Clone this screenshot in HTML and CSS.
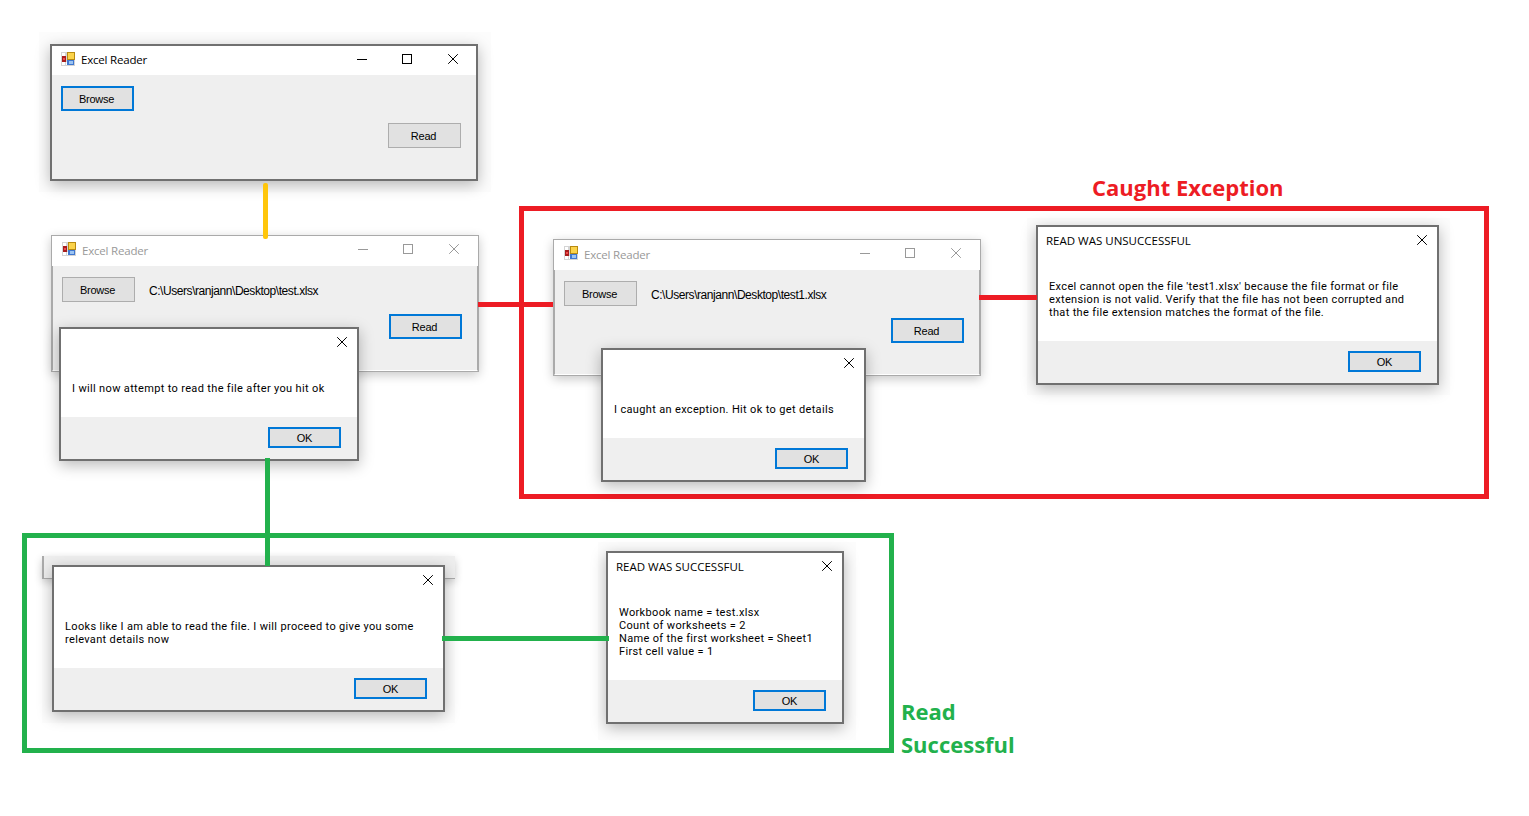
FILE: index.html
```html
<!DOCTYPE html>
<html lang="en">
<head>
  <meta charset="UTF-8" />
  <title>Excel Reader flow</title>
  <link rel="stylesheet" href="styles.css">
</head>
<body>
  <svg class="defs" width="0" height="0">
    <symbol id="app-icon" viewBox="0 0 14 14">
      <rect width="14" height="14" fill="#d4d4d4"/>
      <rect x="1" y="1" width="3" height="3" fill="#fff"/>
      <rect x="1" y="10" width="3" height="3" fill="#fff"/>
      <rect x="5" y="10" width="1" height="3" fill="#fff"/>
      <rect x="1" y="4" width="4" height="6" fill="#a81c1c"/>
      <rect x="2" y="6" width="2" height="2" fill="#f04a4a"/>
      <rect x="6" y="0" width="8" height="8" fill="#b88a10"/>
      <rect x="7" y="1" width="6" height="6" fill="#fbd34a"/>
      <rect x="6" y="8" width="7" height="5" fill="#3f77d0"/>
      <rect x="8" y="9" width="4" height="3" fill="#9cc4f2"/>
    </symbol>
    <symbol id="ico-min" viewBox="0 0 10 10"><path d="M0 5.5H10" stroke="currentColor" fill="none"/></symbol>
    <symbol id="ico-max" viewBox="0 0 10 10"><rect x=".5" y=".5" width="9" height="9" stroke="currentColor" fill="none"/></symbol>
    <symbol id="ico-close" viewBox="0 0 10 10"><path d="M.2 .2L9.8 9.8M9.8 .2L.2 9.8" stroke="currentColor" fill="none"/></symbol>
  </svg>

  <div class="haze haze-main"></div>
  <div class="haze haze-error"></div>
  <div class="haze haze-details"></div>
  <div class="haze haze-ok"></div>

  <!-- step 1 -->
  <div class="window win-start">
    <div class="titlebar">
      <svg class="app-icon"><use href="#app-icon"/></svg>
      <span class="title">Excel Reader</span>
      <span class="caption caption-min"><svg><use href="#ico-min"/></svg></span>
      <span class="caption"><svg><use href="#ico-max"/></svg></span>
      <span class="caption"><svg><use href="#ico-close"/></svg></span>
    </div>
    <div class="client">
      <div class="row"><button class="btn focus">Browse</button></div>
      <div class="row row-end"><button class="btn">Read</button></div>
    </div>
  </div>

  <!-- step 2 -->
  <div class="window inactive win-picked">
    <div class="titlebar">
      <svg class="app-icon"><use href="#app-icon"/></svg>
      <span class="title">Excel Reader</span>
      <span class="caption caption-min"><svg><use href="#ico-min"/></svg></span>
      <span class="caption"><svg><use href="#ico-max"/></svg></span>
      <span class="caption"><svg><use href="#ico-close"/></svg></span>
    </div>
    <div class="client">
      <div class="row"><button class="btn">Browse</button><span class="path">C:\Users\ranjann\Desktop\test.xlsx</span></div>
      <div class="row row-end"><button class="btn focus">Read</button></div>
    </div>
  </div>

  <div class="window dialog dlg-attempt">
    <div class="titlebar">
      <span class="title"></span>
      <span class="caption small"><svg><use href="#ico-close"/></svg></span>
    </div>
    <div class="msg"><p>I will now attempt to read the file after you hit ok</p></div>
    <div class="footer"><button class="btn focus ok">OK</button></div>
  </div>

  <!-- failure path -->
  <div class="frame frame-red"></div>
  <h2 class="label label-red">Caught Exception</h2>

  <div class="window inactive win-bad">
    <div class="titlebar">
      <svg class="app-icon"><use href="#app-icon"/></svg>
      <span class="title">Excel Reader</span>
      <span class="caption caption-min"><svg><use href="#ico-min"/></svg></span>
      <span class="caption"><svg><use href="#ico-max"/></svg></span>
      <span class="caption"><svg><use href="#ico-close"/></svg></span>
    </div>
    <div class="client">
      <div class="row"><button class="btn">Browse</button><span class="path">C:\Users\ranjann\Desktop\test1.xlsx</span></div>
      <div class="row row-end"><button class="btn focus">Read</button></div>
    </div>
  </div>

  <div class="window dialog dlg-caught">
    <div class="titlebar">
      <span class="title"></span>
      <span class="caption small"><svg><use href="#ico-close"/></svg></span>
    </div>
    <div class="msg"><p>I caught an exception. Hit ok to get details</p></div>
    <div class="footer"><button class="btn focus ok">OK</button></div>
  </div>

  <div class="window dialog dlg-error">
    <div class="titlebar">
      <span class="title">READ WAS UNSUCCESSFUL</span>
      <span class="caption small"><svg><use href="#ico-close"/></svg></span>
    </div>
    <div class="msg"><p>Excel cannot open the file 'test1.xlsx' because the file format or file<br>extension is not valid. Verify that the file has not been corrupted and<br>that the file extension matches the format of the file.</p></div>
    <div class="footer"><button class="btn focus ok">OK</button></div>
  </div>

  <!-- success path -->
  <div class="frame frame-green"></div>
  <h2 class="label label-green">Read<br>Successful</h2>
  <div class="sliver"></div>

  <div class="window dialog dlg-proceed">
    <div class="titlebar">
      <span class="title"></span>
      <span class="caption small"><svg><use href="#ico-close"/></svg></span>
    </div>
    <div class="msg"><p>Looks like I am able to read the file. I will proceed to give you some<br>relevant details now</p></div>
    <div class="footer"><button class="btn focus ok">OK</button></div>
  </div>

  <div class="window dialog dlg-details">
    <div class="titlebar">
      <span class="title">READ WAS SUCCESSFUL</span>
      <span class="caption small"><svg><use href="#ico-close"/></svg></span>
    </div>
    <div class="msg"><p>Workbook name = test.xlsx<br>Count of worksheets = 2<br>Name of the first worksheet = Sheet1<br>First cell value = 1</p></div>
    <div class="footer"><button class="btn focus ok">OK</button></div>
  </div>

  <!-- connectors -->
  <div class="link link-yellow"></div>
  <div class="link link-red-a"></div>
  <div class="link link-red-b"></div>
  <div class="link link-green-a"></div>
  <div class="link link-green-b"></div>
</body>
</html>
```

FILE: styles.css
```css
html, body {
  margin: 0;
  height: 100%;
  background: #fff;
  overflow: hidden;
}
body {
  position: relative;
  font-family: "Open Sans", sans-serif;
  font-size: 12px;
  color: #000;
}
.defs {
  position: absolute;
}

/* windows */
.window {
  position: absolute;
  box-sizing: border-box;
  display: flex;
  flex-direction: column;
  border: 2px solid #707070;
  background: #efefef;
  box-shadow: 0 4px 14px rgba(0, 0, 0, 0.28);
}
.window.inactive {
  border-width: 1px;
  border-color: #aaa;
  box-shadow: 0 3px 10px rgba(0, 0, 0, 0.22);
}
.titlebar {
  height: 29px;
  flex: none;
  box-sizing: border-box;
  display: flex;
  align-items: center;
  background: #fff;
  padding: 0 0 4px 9px;
}
.inactive .titlebar {
  height: 30px;
  padding-left: 10px;
  padding-right: 1px;
}
.dialog .titlebar {
  padding-left: 8px;
}
.app-icon {
  width: 14px;
  height: 14px;
  margin-right: 6px;
}
.title {
  flex: 1;
  padding-top: 2px;
  font-size: 11.5px;
  white-space: nowrap;
  letter-spacing: -0.2px;
}
.dialog .title {
  letter-spacing: 0;
}
.inactive .title {
  color: #999;
}
.caption {
  width: 46px;
  display: flex;
  justify-content: center;
  color: #000;
}
.caption.small {
  width: 30px;
}
.inactive .caption {
  color: #999;
}
.caption svg {
  width: 10px;
  height: 10px;
}
.caption-min svg {
  margin-left: 2px;
}

.client {
  flex: 1;
  padding: 11px 15px 0 9px;
}
.inactive .client {
  border: 1px solid #aaa;
  border-width: 0 1px;
  border-bottom: 1px solid #fff;
}
.row {
  display: flex;
  align-items: center;
  gap: 14px;
  height: 25px;
  margin-bottom: 12px;
}
.row-end {
  justify-content: flex-end;
}
.btn {
  box-sizing: border-box;
  width: 73px;
  height: 25px;
  padding: 0 2px 0 0;
  border: 1px solid #adadad;
  background: #e1e1e1;
  font-family: "Liberation Sans", sans-serif;
  font-size: 11px;
  letter-spacing: -0.25px;
  color: #000;
}
.btn.focus {
  border: 2px solid #0078d7;
}
.btn.ok {
  height: 21px;
  padding: 0;
}
.path {
  font-family: "Liberation Sans", sans-serif;
  letter-spacing: -0.44px;
  padding-top: 2px;
  white-space: nowrap;
}

.msg {
  flex: 1;
  display: flex;
  align-items: center;
  background: #fff;
  padding: 0 11px;
}
.msg p {
  margin: 0;
  padding-top: 2px;
  font-family: Roboto, "Open Sans", sans-serif;
  font-size: 11px;
  line-height: 13px;
  letter-spacing: 0.34px;
  white-space: nowrap;
}
.footer {
  height: 42px;
  flex: none;
  box-sizing: border-box;
  display: flex;
  justify-content: flex-end;
  padding: 10px 16px 0 0;
}

/* where each window sits on the canvas */
.win-start { left: 50px; top: 44px; width: 428px; height: 137px; }
.win-picked { left: 51px; top: 235px; width: 428px; height: 137px; }
.win-bad { left: 553px; top: 239px; width: 428px; height: 137px; }
.dlg-attempt { left: 59px; top: 327px; width: 300px; height: 134px; }
.dlg-caught { left: 601px; top: 348px; width: 265px; height: 134px; }
.dlg-error { left: 1036px; top: 225px; width: 403px; height: 160px; }
.dlg-proceed { left: 52px; top: 565px; width: 393px; height: 147px; }
.dlg-details { left: 606px; top: 551px; width: 238px; height: 173px; }

/* pale rectangles left over from the window captures */
.haze {
  position: absolute;
  background: #fcfcfc;
}
.haze-main { left: 39px; top: 32px; width: 452px; height: 160px; }
.haze-error { left: 1027px; top: 218px; width: 423px; height: 177px; }
.haze-details { left: 598px; top: 542px; width: 258px; height: 198px; }
.haze-ok { left: 42px; top: 556px; width: 413px; height: 167px; }

.sliver {
  position: absolute;
  left: 42px;
  top: 556px;
  width: 411px;
  height: 22px;
  background: #eee;
  border-left: 2px solid #aaa;
  border-bottom: 1px solid #aaa;
  box-shadow: 0 3px 8px rgba(0, 0, 0, 0.2);
}

/* frames and labels */
.frame {
  position: absolute;
  box-sizing: border-box;
  border: 5px solid;
}
.frame-red {
  left: 519px;
  top: 206px;
  width: 970px;
  height: 293px;
  border-color: #ed1c24;
}
.frame-green {
  left: 22px;
  top: 533px;
  width: 872px;
  height: 220px;
  border-color: #22b14c;
}
.label {
  position: absolute;
  margin: 0;
  font-size: 22px;
  font-weight: 700;
  line-height: 33px;
  white-space: nowrap;
}
.label-red {
  left: 1092px;
  top: 171px;
  color: #ed1c24;
}
.label-green {
  left: 901px;
  top: 695px;
  color: #22b14c;
}

/* connectors */
.link {
  position: absolute;
}
.link-yellow { left: 263px; top: 183px; width: 5px; height: 56px; background: #ffc60b; border-radius: 2px; }
.link-red-a { left: 478px; top: 302px; width: 75px; height: 5px; background: #ed1c24; }
.link-red-b { left: 979px; top: 295px; width: 58px; height: 5px; background: #ed1c24; }
.link-green-a { left: 265px; top: 458px; width: 5px; height: 108px; background: #22b14c; }
.link-green-b { left: 442px; top: 636px; width: 167px; height: 5px; background: #22b14c; }
```
